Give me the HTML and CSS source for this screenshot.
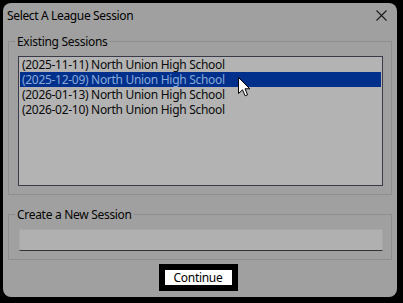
FILE: index.html
```html
<!DOCTYPE html>
<html>
<head>
<meta charset="utf-8">
<link rel="stylesheet" href="styles.css">
</head>
<body>
<div class="window">
  <div class="titlebar">
    <span class="title">Select A League Session</span>
    <svg class="close" width="11" height="11" viewBox="0 0 11 11"><path d="M0.5 0.5 L10.5 10.5 M10.5 0.5 L0.5 10.5" stroke="#1a1a1a" stroke-width="1.1" fill="none"/></svg>
  </div>
  <fieldset class="group group-sessions">
    <legend class="legend">Existing Sessions</legend>
    <div class="listbox">
      <div class="item">(2025-11-11) North Union High School</div>
      <div class="item selected">(2025-12-09) North Union High School</div>
      <div class="item">(2026-01-13) North Union High School</div>
      <div class="item">(2026-02-10) North Union High School</div>
    </div>
  </fieldset>
  <fieldset class="group group-new">
    <legend class="legend">Create a New Session</legend>
    <div class="textbox"></div>
  </fieldset>
  <div class="actions">
    <div class="button"><span class="button-face">Continue</span></div>
  </div>
  <svg class="cursor" width="13" height="20" viewBox="0 0 13 20"><path d="M0.5 0.5 L0.5 16.5 L4.5 12.8 L7.2 18.8 L9.6 17.8 L7 11.8 L11.8 11.8 Z" fill="#ffffff" stroke="#000000" stroke-width="1" stroke-linejoin="miter"/></svg>
</div>
</body>
</html>
```
FILE: styles.css
```css
html, body {
  margin: 0;
  padding: 0;
  background: #000000;
}
body {
  width: 403px;
  height: 303px;
  overflow: hidden;
  font-family: "Noto Sans", "Open Sans", sans-serif;
  font-size: 12px;
  line-height: 15px;
  letter-spacing: -0.3px;
  color: #000000;
}
.window {
  position: relative;
  margin: 3px;
  width: 394px;
  height: 294px;
  box-sizing: border-box;
  background: #a0a0a0;
  border-radius: 8px;
  display: flex;
  flex-direction: column;
}
.titlebar {
  height: 31px;
  box-sizing: border-box;
  padding: 5px 10px 0 4px;
  display: flex;
  justify-content: space-between;
  align-items: flex-start;
}
.title {
  font-size: 12px;
  letter-spacing: -0.35px;
}
.close {
  margin-top: 2px;
  display: block;
}
.group {
  margin: 0 5px;
  padding: 0 8px 8px 9px;
  border: 1px solid #8e8e8e;
  min-width: 0;
}
.group-new {
  margin-top: 12px;
}
.legend {
  margin-left: -3px;
  padding: 0 2px;
  line-height: 15px;
  color: #050505;
}
.listbox {
  margin-top: 7px;
  height: 130px;
  box-sizing: border-box;
  border: 1px solid #3a3a48;
  background: #b3b3b3;
  padding: 0 1px;
}
.item {
  height: 15px;
  line-height: 15px;
  padding-left: 2px;
  white-space: nowrap;
  color: #0a0a0a;
}
.item.selected {
  background: #00308c;
  color: #8aaad8;
}
.textbox {
  margin-top: 7px;
  margin-left: 1px;
  height: 22px;
  box-sizing: border-box;
  background: #b0b0b0;
  border: 1px solid #a6a6a6;
  border-bottom: 1px solid #333333;
}
.actions {
  display: flex;
  justify-content: center;
  margin-top: 4px;
  padding-right: 4px;
}
.button {
  border: 6px solid #000000;
  background: #ffffff;
  width: 67px;
  height: 15px;
  display: flex;
  align-items: center;
  justify-content: center;
}
.button-face {
  line-height: 15px;
}
.cursor {
  position: absolute;
  left: 235px;
  top: 74px;
}
```
